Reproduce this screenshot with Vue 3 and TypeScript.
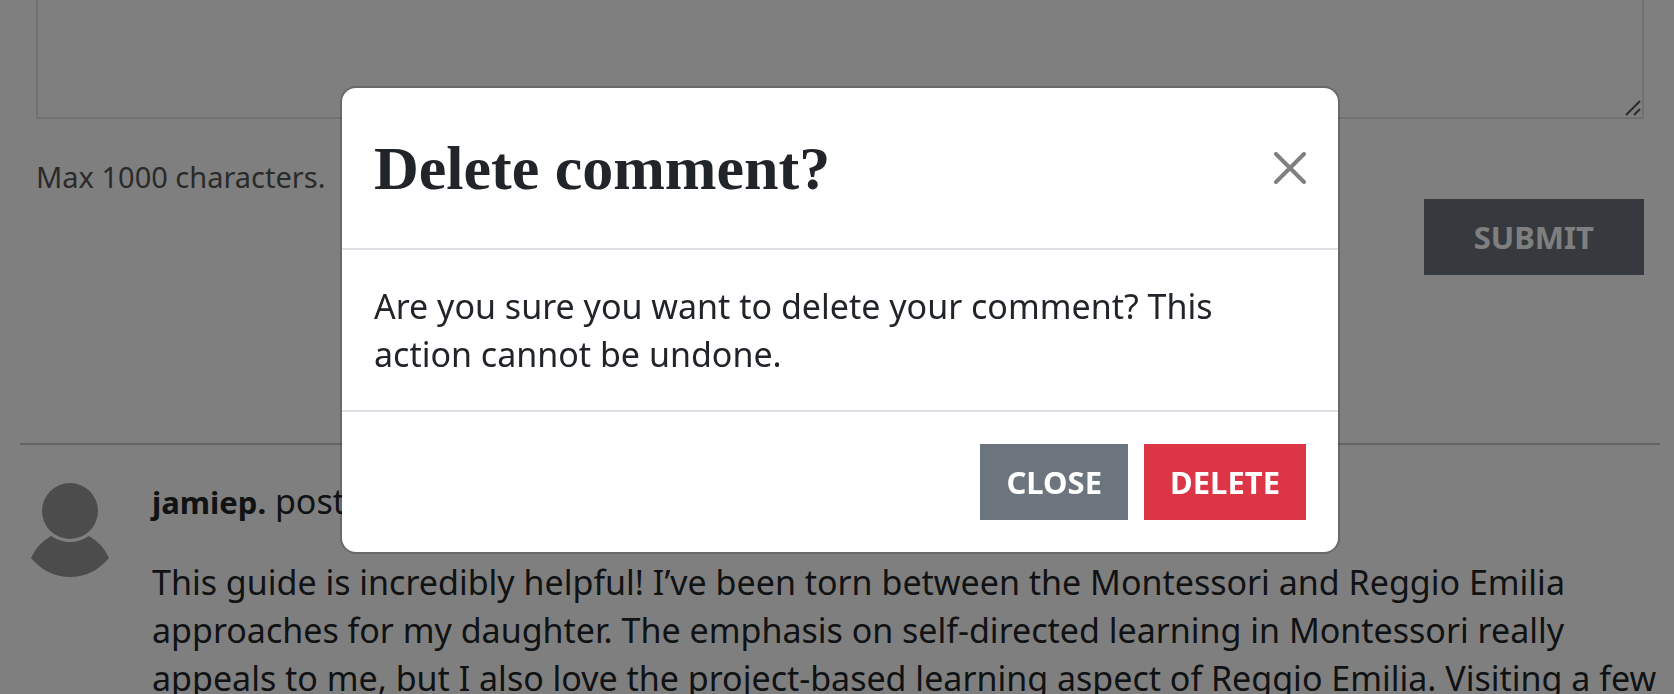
<script setup lang="ts">
import { ref } from 'vue'

interface Comment {
  author: string
  action: string
  body: string
}

const maxLength = 1000
const draft = ref('')
const open = ref(true)

const comment: Comment = {
  author: 'jamiep.',
  action: 'post',
  body: 'This guide is incredibly helpful! I’ve been torn between the Montessori and Reggio Emilia approaches for my daughter. The emphasis on self-directed learning in Montessori really appeals to me, but I also love the project-based learning aspect of Reggio Emilia. Visiting a few',
}

function close(): void {
  open.value = false
}
</script>

<template>
  <div class="page">
    <main>
      <form class="editor" @submit.prevent>
        <div class="field">
          <textarea v-model="draft" :maxlength="maxLength" aria-label="Comment" aria-describedby="hint"></textarea>
          <svg class="grip" viewBox="0 0 16 16" aria-hidden="true">
            <path d="M1 15 15 1M9 15l6-6" />
          </svg>
        </div>
        <p id="hint" class="hint">Max {{ maxLength }} characters.</p>
        <button class="btn submit" type="submit">SUBMIT</button>
      </form>
      <article class="comment">
        <svg class="avatar" viewBox="0 0 78 96" aria-hidden="true">
          <circle cx="39" cy="32" r="28" />
          <path d="M20 57Q39 69 58 57Q72 65 78 79Q62 98 39 98Q16 98 0 79Q6 65 20 57Z" />
        </svg>
        <div class="content">
          <p><strong>{{ comment.author }}</strong> {{ comment.action }}</p>
          <p>{{ comment.body }}</p>
        </div>
      </article>
    </main>

    <div v-if="open" class="backdrop">
      <section class="modal" role="dialog" aria-modal="true" aria-labelledby="title">
        <header>
          <h1 id="title">Delete comment?</h1>
          <button class="dismiss" type="button" aria-label="Dismiss" @click="close">
            <svg viewBox="0 0 32 32" aria-hidden="true"><path d="M2 2 30 30M30 2 2 30" /></svg>
          </button>
        </header>
        <p class="message">Are you sure you want to delete your comment? This action cannot be undone.</p>
        <footer>
          <button class="btn" type="button" @click="close">CLOSE</button>
          <button class="btn danger" type="button" @click="close">DELETE</button>
        </footer>
      </section>
    </div>
  </div>
</template>

<style>
body {
  margin: 0;
  background: #fff;
}
</style>

<style scoped>
.page {
  height: 100vh;
  overflow: hidden;
  box-sizing: border-box;
  padding: 0 14px 0 20px;
  font: 34px/48px "Noto Sans", "Open Sans", sans-serif;
  color: #212529;
}
p, h1 {
  margin: 0;
}
.editor {
  display: flex;
  flex-direction: column;
  padding: 0 16px 168px;
  border-bottom: 2px solid #c8c8c8;
}
.field {
  position: relative;
  display: flex;
}
textarea {
  flex: 1;
  box-sizing: border-box;
  height: 119px;
  padding: 16px;
  border: 2px solid #dee2e6;
  border-top: 0;
  background: #fff;
  font: inherit;
  color: inherit;
  resize: none;
  outline: 0;
}
.grip {
  position: absolute;
  right: 3px;
  bottom: 3px;
  width: 16px;
  height: 16px;
  fill: none;
  stroke: #555;
  stroke-width: 2;
}
.hint {
  margin-top: 36px;
  font-size: 29px;
  line-height: 44px;
  color: #555;
}
.btn {
  box-sizing: border-box;
  height: 76px;
  padding: 0 26px;
  border: 0;
  background: #6c757d;
  color: #fff;
  font: bold 31px/48px "Noto Sans", "Open Sans", sans-serif;
  cursor: pointer;
}
.submit {
  align-self: flex-end;
  padding: 0 50px;
}
.danger {
  background: #dc3545;
}
.comment {
  display: flex;
  align-items: flex-start;
  gap: 43px;
  padding: 32px 0 0 11px;
}
.avatar {
  flex: none;
  width: 78px;
  height: 96px;
  margin-top: 2px;
  overflow: visible;
  fill: #999;
}
.content {
  flex: 1;
  display: grid;
  gap: 32px;
}
strong {
  font-size: 31px;
}
.backdrop {
  position: fixed;
  inset: 0;
  display: flex;
  justify-content: center;
  align-items: flex-start;
  padding: 86px 0 0 6px;
  background: rgba(0, 0, 0, 0.5);
}
.modal {
  box-sizing: border-box;
  width: 100%;
  max-width: 1000px;
  border: 2px solid rgba(0, 0, 0, 0.175);
  border-radius: 16px;
  background: #fff;
  background-clip: padding-box;
}
header {
  display: flex;
  align-items: center;
  justify-content: space-between;
  padding: 32px;
  border-bottom: 2px solid #dee2e6;
}
h1 {
  font: bold 62px/96px "Liberation Serif", serif;
}
.dismiss {
  display: flex;
  padding: 0;
  border: 0;
  background: none;
  cursor: pointer;
}
.dismiss svg {
  width: 32px;
  height: 32px;
  fill: none;
  stroke: #808080;
  stroke-width: 4;
  stroke-linecap: round;
}
.message {
  padding: 32px;
}
footer {
  display: flex;
  justify-content: flex-end;
  gap: 16px;
  padding: 32px;
  border-top: 2px solid #dee2e6;
}
</style>
